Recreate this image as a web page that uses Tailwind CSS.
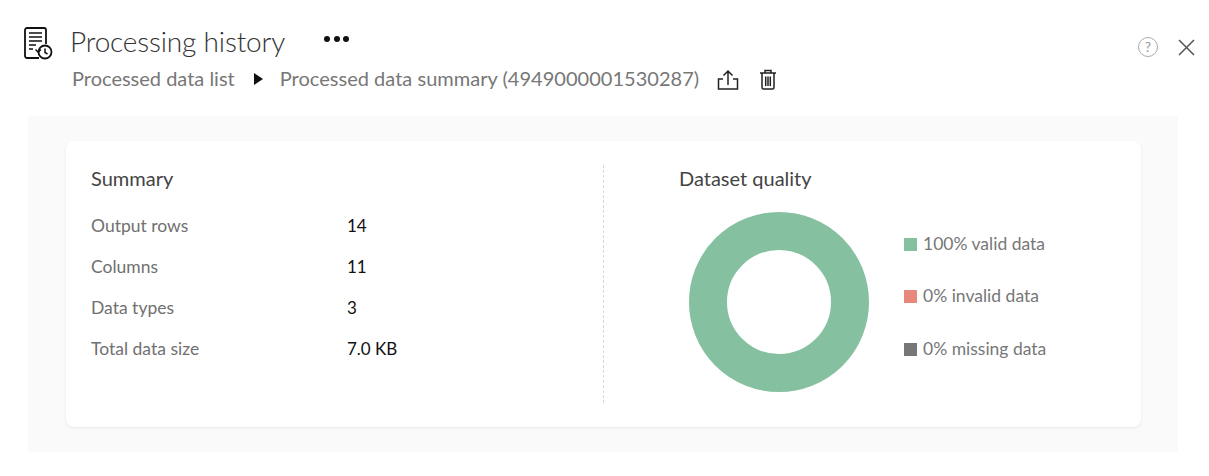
<!DOCTYPE html>
<html><head><meta charset="utf-8"><script src="https://cdn.jsdelivr.net/npm/@tailwindcss/browser@4"></script></head>
<body class="bg-white font-['Lato',sans-serif] w-[1209px] h-[476px] overflow-hidden">
<div class="flex h-[116px]">
  <div class="w-[70px] shrink-0 pl-[24px] pt-[27px]">
    <svg width="29" height="33" viewBox="0 0 29 33" fill="none" stroke="#111" stroke-width="1.800">
      <path d="M15 31H3a2 2 0 0 1-2-2V3a2 2 0 0 1 2-2h17a2 2 0 0 1 2 2v14"/>
      <path d="M5 6h13M5 10h13M5 14h13M5 18h7M5 22h4" stroke-width="1.500"/>
      <circle cx="21" cy="25" r="6.500" fill="#fff"/>
      <path d="M21 21.500v4l2.500 1.500" stroke-width="1.500"/>
      <path d="M11.500 22.500l2.700 2.700 2.700-2.700" fill="none" stroke-width="1.500"/>
    </svg>
  </div>
  <div class="flex-1">
    <div class="flex items-center h-[34px] mt-[24px]">
      <h1 class="text-[28px] font-light text-[#333] leading-[34px] tracking-[-0.17px]">Processing history</h1>
      <div class="flex gap-[3.500px] ml-[39px] mb-[5px]">
        <span class="size-[6px] rounded-full bg-[#111]"></span><span class="size-[6px] rounded-full bg-[#111]"></span><span class="size-[6px] rounded-full bg-[#111]"></span>
      </div>
    </div>
    <div class="flex items-center h-[24px] mt-[8px] ml-[2px] text-[20px] text-[#777] leading-[24px]">
      <span>Processed data list</span>
      <svg class="ml-[19px] mt-[2px]" width="9" height="12" viewBox="0 0 9 12"><path d="M0 0L9 6L0 12Z" fill="#111"/></svg>
      <span class="ml-[17px] tracking-[0.02px]">Processed data summary (4949000001530287)</span>
      <svg class="ml-[18px] mt-[3px]" width="22" height="22" viewBox="0 0 22 22" fill="none" stroke="#222" stroke-width="1.500">
        <path d="M6 10H1.500v10h19V10H16"/><path d="M11 16V2M6.500 6.500L11 2l4.500 4.500"/>
      </svg>
      <svg class="ml-[20px] mt-[3px]" width="18" height="21" viewBox="0 0 18 21" fill="none" stroke="#222" stroke-width="1.500">
        <path d="M1 4h16M6 4V1.500h6V4M3 4v14.500a1.500 1.500 0 0 0 1.500 1.500h9a1.500 1.500 0 0 0 1.500-1.500V4M6.700 7.500v9.500M9 7.500v9.500M11.300 7.500v9.500"/>
      </svg>
    </div>
  </div>
  <div class="flex items-start gap-[18px] pt-[37px] pr-[13px] shrink-0">
    <div class="size-[20px] mt-0 rounded-full border border-[#aaa] text-[#999] text-[14px] leading-[18px] text-center">?</div>
    <svg width="20" height="20" viewBox="0 0 20 20" stroke="#555" stroke-width="1.500" fill="none"><path d="M3 3l15 15M18 3L3 18"/></svg>
  </div>
</div>
<div class="ml-[28px] w-[1150px] h-[336px] bg-[#fafafa] pt-[25px] pl-[38px]">
  <div class="w-[1075px] h-[286px] bg-white rounded-lg shadow-[0_1px_3px_rgba(0,0,0,0.08)] pt-[24px] flex">
    <div class="w-[538px] h-[238px] border-r border-dashed border-[#d8d8d8] pl-[25px] shrink-0">
      <h2 class="text-[20px] text-[#444] leading-[28px] -mt-px">Summary</h2>
      <dl class="mt-[13px] grid grid-cols-[256px_1fr] auto-rows-[41px] items-center text-[17.500px] leading-[24px]">
        <dt class="text-[#707070]">Output rows</dt><dd class="text-[#111] text-[17px]">14</dd>
        <dt class="text-[#707070]">Columns</dt><dd class="text-[#111] text-[17px]">11</dd>
        <dt class="text-[#707070]">Data types</dt><dd class="text-[#111] text-[17px]">3</dd>
        <dt class="text-[#707070]">Total data size</dt><dd class="text-[#111] text-[17px]">7.0 KB</dd>
      </dl>
    </div>
    <div class="pl-[75px]">
      <h2 class="text-[20px] text-[#444] leading-[28px] -mt-px">Dataset quality</h2>
      <div class="flex mt-[20px] ml-[10px]">
        <div class="size-[180px] rounded-full border-[38px] border-[#85c0a0] shrink-0"></div>
        <ul class="ml-[35px] mt-[20px] flex flex-col gap-[28px] text-[17.500px] leading-[24px] text-[#777]">
          <li class="flex items-center gap-[6px]"><span class="size-[13px] bg-[#85c0a0]"></span>100% valid data</li>
          <li class="flex items-center gap-[6px]"><span class="size-[13px] bg-[#e8877b]"></span>0% invalid data</li>
          <li class="flex items-center gap-[6px] mt-px"><span class="size-[13px] bg-[#777]"></span>0% missing data</li>
        </ul>
      </div>
    </div>
  </div>
</div>
</body></html>
